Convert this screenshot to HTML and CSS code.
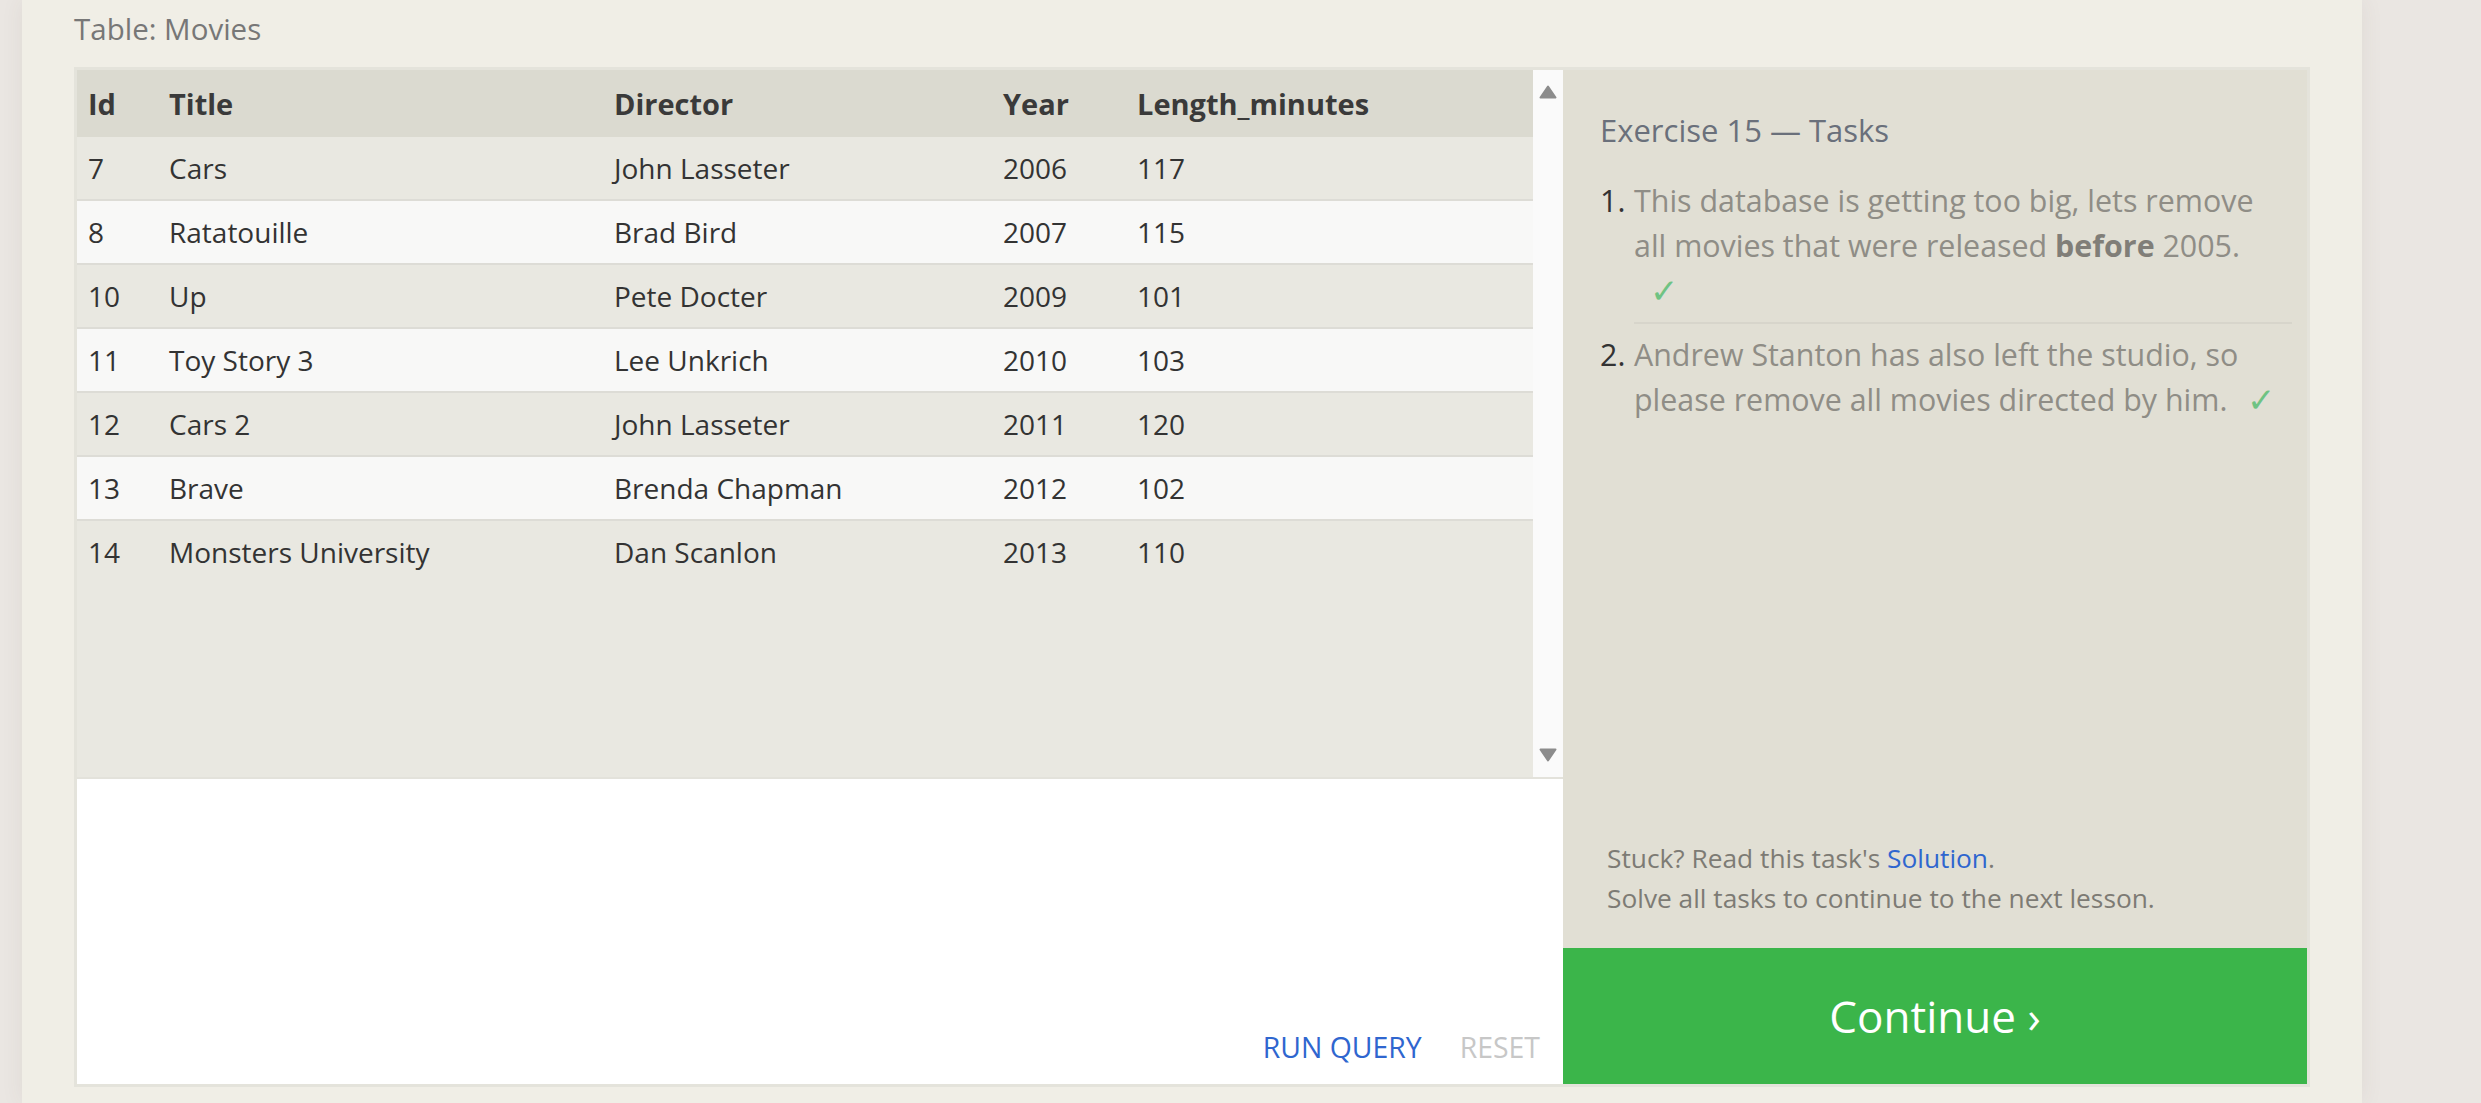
FILE: index.html
```html
<!DOCTYPE html>
<html lang="en">
<head>
<meta charset="utf-8">
<title>SQL Lesson 15 — Movies</title>
<link rel="stylesheet" href="styles.css">
</head>
<body>
<div class="page">
  <div class="table-caption">Table: Movies</div>
  <div class="exercise">
    <div class="workspace">
      <div class="results">
        <div class="table-wrap">
          <table class="results-table">
            <thead>
              <tr><th class="c-id">Id</th><th class="c-title">Title</th><th class="c-dir">Director</th><th class="c-year">Year</th><th class="c-len">Length_minutes</th></tr>
            </thead>
            <tbody>
              <tr><td>7</td><td>Cars</td><td>John Lasseter</td><td>2006</td><td>117</td></tr>
              <tr><td>8</td><td>Ratatouille</td><td>Brad Bird</td><td>2007</td><td>115</td></tr>
              <tr><td>10</td><td>Up</td><td>Pete Docter</td><td>2009</td><td>101</td></tr>
              <tr><td>11</td><td>Toy Story 3</td><td>Lee Unkrich</td><td>2010</td><td>103</td></tr>
              <tr><td>12</td><td>Cars 2</td><td>John Lasseter</td><td>2011</td><td>120</td></tr>
              <tr><td>13</td><td>Brave</td><td>Brenda Chapman</td><td>2012</td><td>102</td></tr>
              <tr><td>14</td><td>Monsters University</td><td>Dan Scanlon</td><td>2013</td><td>110</td></tr>
            </tbody>
          </table>
        </div>
        <div class="scrollbar">
          <svg class="arrow" width="18" height="14" viewBox="0 0 18 14"><path d="M9 1.5 L16.5 12.5 L1.5 12.5 Z" fill="#8c8c8c" stroke="#8c8c8c" stroke-width="2" stroke-linejoin="round"/></svg>
          <svg class="arrow" width="18" height="14" viewBox="0 0 18 14"><path d="M1.5 1.5 L16.5 1.5 L9 12.5 Z" fill="#8c8c8c" stroke="#8c8c8c" stroke-width="2" stroke-linejoin="round"/></svg>
        </div>
      </div>
      <div class="editor">
        <div class="editor-actions">
          <span class="btn-run">RUN QUERY</span>
          <span class="btn-reset">RESET</span>
        </div>
      </div>
    </div>
    <aside class="tasks-panel">
      <div class="tasks-body">
        <h2 class="tasks-title">Exercise 15 — Tasks</h2>
        <ol class="task-list">
          <li class="task"><span class="task-num">1.</span><span class="task-text first">This database is getting too big, lets remove<br>all movies that were released <b>before</b> 2005.<br><span class="check">✓</span></span></li>
          <li class="task"><span class="task-num">2.</span><span class="task-text">Andrew Stanton has also left the studio, so please remove all movies directed by him.<span class="check">✓</span></span></li>
        </ol>
      </div>
      <div class="tasks-foot">
        <p>Stuck? Read this task's <a href="#" class="link">Solution</a>.</p>
        <p>Solve all tasks to continue to the next lesson.</p>
      </div>
      <a href="#" class="continue">Continue ›</a>
    </aside>
  </div>
</div>
</body>
</html>
```
FILE: styles.css
```css
html, body {
  margin: 0;
  padding: 0;
  height: 100%;
  overflow: hidden;
}
body {
  background: #eae6e2;
  font-family: "Segoe UI", "Open Sans", "Noto Sans", sans-serif;
  color: #333;
}
.page {
  margin-left: 22px;
  width: 2340px;
  height: 1103px;
  background: #f0eee6;
  box-shadow: 0 0 22px rgba(90, 70, 50, 0.07);
  padding-left: 52px;
  box-sizing: border-box;
}
.table-caption {
  padding-top: 9px;
  height: 67px;
  box-sizing: border-box;
  font-size: 29.5px;
  line-height: 40px;
  color: #777;
}
.exercise {
  display: flex;
  width: 2236px;
  border: 3px solid #e4e3db;
  box-sizing: border-box;
}
.workspace {
  width: 1486px;
  display: flex;
  flex-direction: column;
}
.results {
  display: flex;
  height: 707px;
  border-bottom: 2px solid #e3e2db;
}
.table-wrap {
  flex: 1;
  background: #e9e8e1;
}
.results-table {
  width: 100%;
  border-collapse: collapse;
  font-size: 28px;
}
.results-table th,
.results-table td {
  text-align: left;
  padding: 0 0 0 11px;
  white-space: nowrap;
}
.results-table th {
  height: 67px;
  background: #dbdad0;
  font-weight: 700;
  font-size: 29px;
  color: #3a3a3a;
}
.results-table td {
  height: 62px;
  color: #333;
}
.results-table tbody tr:nth-child(odd) { background: #e9e8e1; }
.results-table tbody tr:nth-child(even) { background: #f8f8f7; }
.results-table tbody tr:not(:last-child) { border-bottom: 2px solid #dddcd6; }
.c-id { width: 70px; }
.c-title { width: 434px; }
.c-dir { width: 378px; }
.c-year { width: 123px; }
.scrollbar {
  width: 30px;
  background: #fafafa;
  display: flex;
  flex-direction: column;
  justify-content: space-between;
  align-items: center;
  padding: 15px 0 15px;
  box-sizing: border-box;
}
.arrow { display: block; }
.editor {
  height: 305px;
  background: #fff;
  display: flex;
  flex-direction: column;
  justify-content: flex-end;
}
.editor-actions {
  display: flex;
  justify-content: flex-end;
  gap: 38px;
  padding: 0 23px 22px 0;
  font-size: 28.4px;
  line-height: 30px;
}
.btn-run { color: #2f66cf; }
.btn-reset { color: #c7c7c7; }
.tasks-panel {
  flex: 1;
  background: #e1dfd4;
  display: flex;
  flex-direction: column;
}
.tasks-body {
  flex: 1;
  padding: 40px 15px 0 37px;
}
.tasks-title {
  margin: 0;
  font-size: 31px;
  line-height: 40px;
  font-weight: 400;
  color: #6a707b;
}
.task-list {
  list-style: none;
  margin: 20px 0 0;
  padding: 0;
}
.task {
  display: flex;
  font-size: 30.4px;
  line-height: 45px;
}
.task-num {
  width: 34px;
  color: #333;
  flex: none;
  padding-top: 8px;
}
.task-text {
  flex: 1;
  color: #8f8d86;
  padding: 8px 0 9px;
}
.task-text.first { border-bottom: 2px solid #d7d5cb; }
.task-text b { color: #807e78; }
.check {
  display: inline-block;
  margin-left: 16px;
  color: #6fc383;
  font-size: 34px;
  line-height: 45px;
  vertical-align: top;
}
.task:last-child .check { margin-left: 20px; }
.tasks-foot {
  padding: 0 20px 30px 44px;
  font-size: 26.3px;
  line-height: 40px;
  color: #7d7b74;
}
.tasks-foot p { margin: 0; }
.link { color: #2f66cf; text-decoration: none; }
.continue {
  display: flex;
  align-items: center;
  justify-content: center;
  height: 136px;
  background: #3bb54a;
  color: #fff;
  font-size: 44px;
  text-decoration: none;
}
```
